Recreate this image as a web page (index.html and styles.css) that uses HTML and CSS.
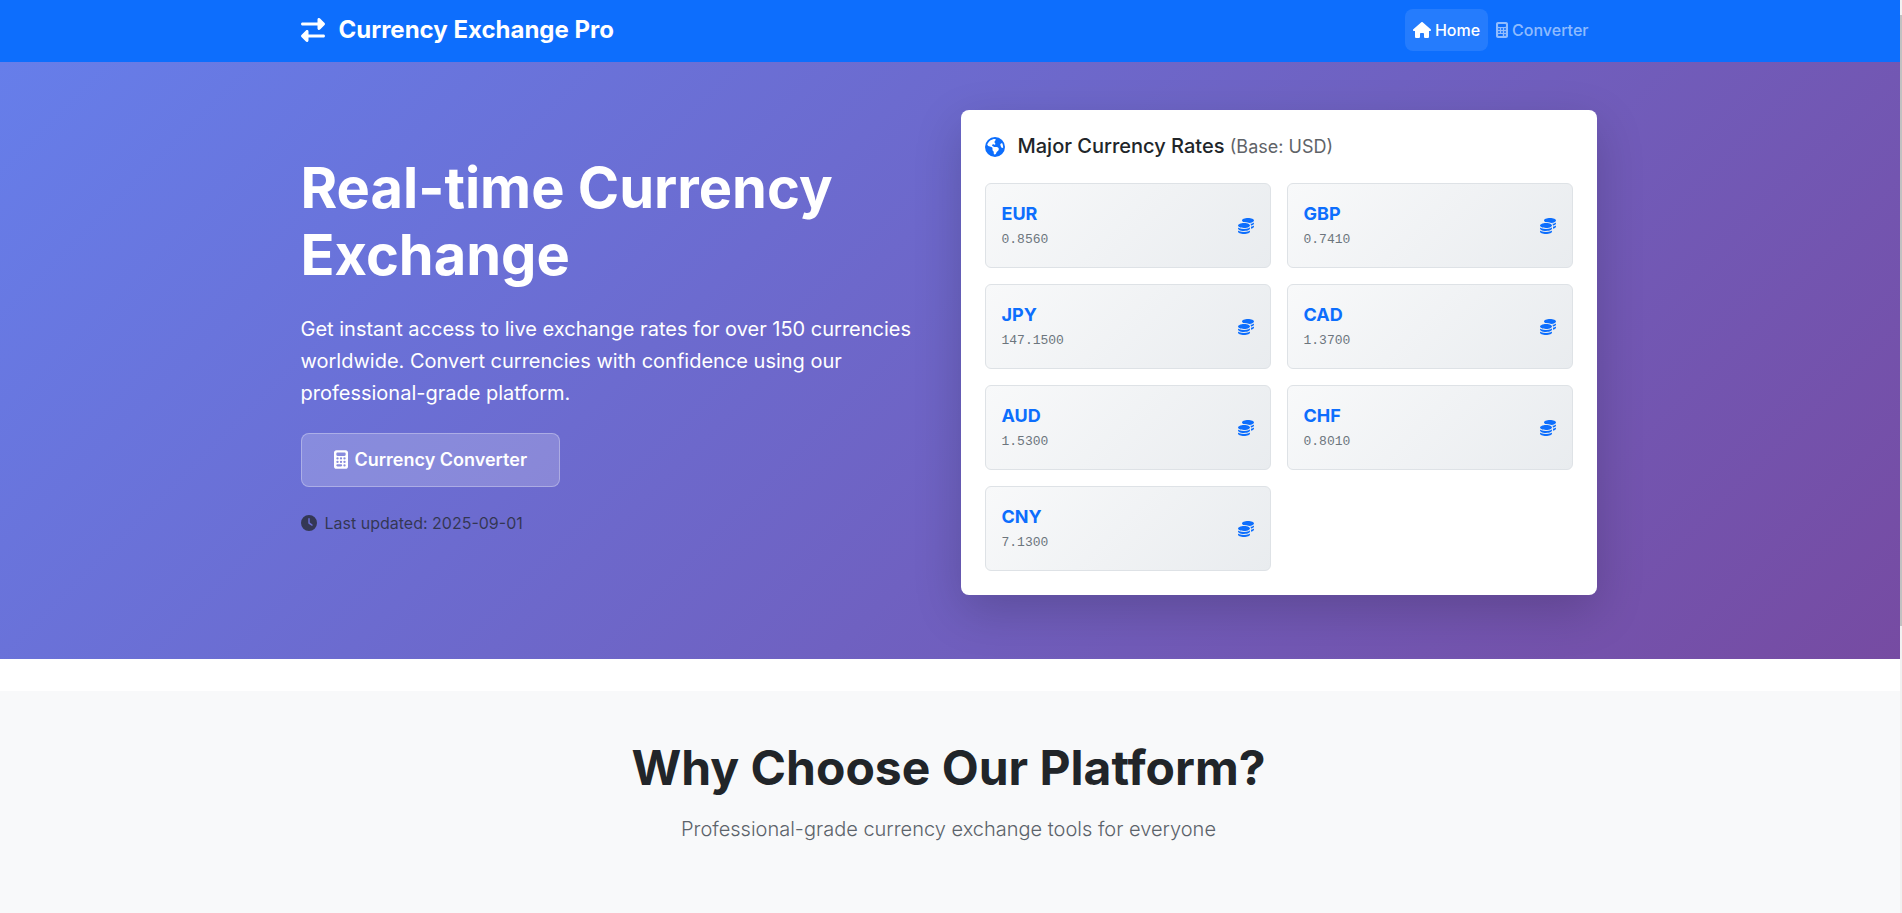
FILE: index.html
```html
<!DOCTYPE html>
<html lang="en">
<head>
<meta charset="utf-8">
<title>Currency Exchange Pro</title>
<link rel="stylesheet" href="styles.css">
</head>
<body>
<svg class="sprite" aria-hidden="true">
  <symbol id="i-calc" viewBox="0 0 384 512"><path fill-rule="evenodd" d="M64 0C28.700 0 0 28.700 0 64V448c0 35.300 28.700 64 64 64H320c35.300 0 64-28.700 64-64V64c0-35.300-28.700-64-64-64H64zM96 64H288c17.700 0 32 14.300 32 32v32c0 17.700-14.300 32-32 32H96c-17.700 0-32-14.300-32-32V96c0-17.700 14.300-32 32-32zm32 160a32 32 0 1 1-64 0 32 32 0 1 1 64 0zM96 352a32 32 0 1 1 0-64 32 32 0 1 1 0 64zM64 416c0-17.700 14.300-32 32-32h96c17.700 0 32 14.300 32 32s-14.300 32-32 32H96c-17.700 0-32-14.300-32-32zM192 256a32 32 0 1 1 0-64 32 32 0 1 1 0 64zm32 64a32 32 0 1 1-64 0 32 32 0 1 1 64 0zm64-64a32 32 0 1 1 0-64 32 32 0 1 1 0 64zm32 64a32 32 0 1 1-64 0 32 32 0 1 1 64 0zM288 448a32 32 0 1 1 0-64 32 32 0 1 1 0 64z"/></symbol>
  <symbol id="i-coins" viewBox="0 0 512 512"><path d="M512 80c0 18-14.300 34.600-38.400 48c-29.100 16.100-72.500 27.500-122.300 30.900c-3.700-1.800-7.400-3.500-11.300-5C300.600 137.400 248.200 128 192 128c-8.300 0-16.400 .2-24.500 .6l-1.100-.6C142.300 114.600 128 98 128 80c0-44.200 86-80 192-80S512 35.800 512 80zM160.700 161.100c10.200-.7 20.700-1.100 31.300-1.100c62.200 0 117.400 12.300 152.500 31.400C369.300 204.900 384 221.700 384 240c0 4-.7 7.900-2.100 11.700c-4.600 13.200-17 25.300-35 35.500c0 0 0 0 0 0c-.1 .1-.3 .1-.4 .2c-.3 .2-.6 .3-.9 .5c-35 19.400-90.800 32-153.600 32c-59.600 0-112.900-11.300-148.200-29.100c-1.900-.9-3.700-1.900-5.500-2.900C14.300 274.600 0 258 0 240c0-34.800 53.400-64.500 128-75.400c10.500-1.500 21.400-2.700 32.700-3.500zM416 240c0-21.900-10.600-39.900-24.100-53.400c28.300-4.400 54.200-11.400 76.200-20.500c16.300-6.800 31.500-15.200 43.900-25.500V176c0 19.300-16.500 37.100-43.800 50.900c-14.600 7.400-32.400 13.700-52.400 18.500c.1-1.800 .2-3.500 .2-5.300zm-32 96c0 18-14.300 34.600-38.400 48c-1.800 1-3.600 1.900-5.500 2.900C304.900 404.700 251.600 416 192 416c-62.800 0-118.600-12.600-153.600-32C14.300 370.600 0 354 0 336V300.600c12.500 10.300 27.600 18.700 43.900 25.500C83.400 342.600 135.800 352 192 352s108.600-9.400 148.100-25.900c7.800-3.200 15.300-6.900 22.400-10.900c6.100-3.400 11.800-7.200 17.200-11.200c1.500-1.100 2.900-2.300 4.300-3.400V304v5.700V336zm32 0V304 278.100c19-4.200 36.500-9.500 52.100-16c16.300-6.800 31.500-15.200 43.900-25.500V272c0 10.500-5 21-14.900 30.900c-16.300 16.300-45 29.700-81.300 38.400c.1-1.700 .2-3.500 .2-5.300zM192 448c56.200 0 108.600-9.400 148.100-25.900c16.300-6.800 31.500-15.200 43.900-25.500V432c0 44.200-86 80-192 80S0 476.200 0 432V396.600c12.500 10.300 27.600 18.700 43.900 25.500C83.400 438.600 135.800 448 192 448z"/></symbol>
</svg>
<div class="scroll-track" aria-hidden="true"><div class="scroll-thumb"></div></div>
<nav class="navbar">
  <div class="container navbar-inner">
    <a class="brand" href="#">
      <svg class="icon icon-swap" viewBox="0 0 512 512" aria-hidden="true"><path d="M32 96l320 0V32c0-12.900 7.800-24.600 19.800-29.600s25.700-2.200 34.900 6.900l96 96c6 6 9.400 14.100 9.400 22.600s-3.400 16.600-9.400 22.600l-96 96c-9.200 9.200-22.900 11.900-34.900 6.900s-19.800-16.600-19.800-29.600V160L32 160c-17.700 0-32-14.300-32-32s14.300-32 32-32zM480 352c17.700 0 32 14.300 32 32s-14.300 32-32 32H160v64c0 12.900-7.800 24.600-19.800 29.600s-25.700 2.200-34.900-6.900l-96-96c-6-6-9.400-14.100-9.400-22.600s3.400-16.600 9.400-22.600l96-96c9.200-9.200 22.900-11.900 34.900-6.900s19.800 16.600 19.800 29.600l0 64H480z"/></svg>
      <span>Currency Exchange Pro</span>
    </a>
    <div class="nav-links">
      <a class="nav-link active" href="#"><svg class="icon icon-home" viewBox="0 0 576 512" aria-hidden="true"><path d="M575.800 255.500c0 18-15 32.100-32 32.100h-32l.7 160.200c0 2.700-.2 5.400-.5 8.100V472c0 22.100-17.900 40-40 40H456c-1.100 0-2.200 0-3.300-.1c-1.400 .1-2.800 .1-4.200 .1H416 392c-22.100 0-40-17.900-40-40V448 384c0-17.700-14.300-32-32-32H256c-17.700 0-32 14.300-32 32v64 24c0 22.100-17.900 40-40 40H160 128.100c-1.500 0-3-.1-4.500-.2c-1.200 .1-2.400 .2-3.600 .2H104c-22.100 0-40-17.900-40-40V360c0-.9 0-1.900 .1-2.800V287.600H32c-18 0-32-14-32-32.100c0-9 3-17 10-24L266.400 8c7-7 15-8 22-8s15 2 21 7L564.800 231.500c8 7 12 15 11 24z"/></svg><span>Home</span></a>
      <a class="nav-link" href="#"><svg class="icon icon-calc" aria-hidden="true"><use href="#i-calc"/></svg><span>Converter</span></a>
    </div>
  </div>
</nav>
<header class="hero">
  <div class="container hero-grid">
    <div class="hero-text">
      <h1>Real-time Currency Exchange</h1>
      <p class="lead">Get instant access to live exchange rates for over 150 currencies worldwide. Convert currencies with confidence using our professional-grade platform.</p>
      <a class="cta" href="#"><svg class="icon icon-cta" aria-hidden="true"><use href="#i-calc"/></svg><span>Currency Converter</span></a>
      <p class="updated"><svg class="icon icon-clock" viewBox="0 0 512 512" aria-hidden="true"><path d="M256 0a256 256 0 1 1 0 512A256 256 0 1 1 256 0zM232 120V256c0 8 4 15.500 10.700 20l96 64c11 7.400 25.900 4.400 33.300-6.700s4.400-25.900-6.700-33.300L280 243.200V120c0-13.300-10.700-24-24-24s-24 10.700-24 24z"/></svg><span>Last updated: 2025-09-01</span></p>
    </div>
    <section class="rates">
      <h2 class="rates-title"><svg class="icon icon-globe" viewBox="0 0 512 512" aria-hidden="true"><path d="M57.700 193l9.400 16.400c8.300 14.500 21.900 25.200 38 29.800L163 255.700c17.200 4.900 29 20.600 29 38.500v39.900c0 11 6.200 21 16 25.900s16 14.900 16 25.900v39c0 15.600 14.900 26.900 29.900 22.600c16.100-4.600 28.600-17.500 32.700-33.800l2.800-11.200c4.200-16.900 15.200-31.400 30.300-40l8.100-4.600c15-8.500 24.200-24.500 24.200-41.700v-8.300c0-12.700-5.100-24.900-14.100-33.900l-3.900-3.900c-9-9-21.200-14.100-33.900-14.100H257c-11.100 0-22.100-2.900-31.800-8.400l-34.500-19.700c-4.300-2.500-7.600-6.500-9.200-11.200c-3.200-9.600 1.100-20 10.200-24.500l5.900-3c6.600-3.300 14.300-3.900 21.300-1.500l23.200 7.700c8.200 2.700 17.200-.4 21.900-7.500c4.700-7 4.200-16.300-1.200-22.800l-13.600-16.300c-10-12-9.900-29.500 .3-41.300l15.700-18.300c8.800-10.300 10.200-25 3.500-36.700l-2.400-4.200c-3.500-.2-6.900-.3-10.400-.3C163.100 48 84.400 108.900 57.700 193zM464 256c0-36.800-9.600-71.400-26.400-101.500L412 164.800c-15.700 6.300-23.800 23.800-18.500 39.800l16.900 50.700c3.500 10.400 12 18.300 22.600 20.900l29.100 7.300c1.200-9 1.800-18.200 1.800-27.500zM0 256a256 256 0 1 1 512 0A256 256 0 1 1 0 256z" fill-rule="evenodd"/></svg><span>Major Currency Rates <small>(Base: USD)</small></span></h2>
      <div class="rate-grid">
        <div class="rate"><div><h3>EUR</h3><p>0.8560</p></div><svg class="icon icon-coins" aria-hidden="true"><use href="#i-coins"/></svg></div>
        <div class="rate"><div><h3>GBP</h3><p>0.7410</p></div><svg class="icon icon-coins" aria-hidden="true"><use href="#i-coins"/></svg></div>
        <div class="rate"><div><h3>JPY</h3><p>147.1500</p></div><svg class="icon icon-coins" aria-hidden="true"><use href="#i-coins"/></svg></div>
        <div class="rate"><div><h3>CAD</h3><p>1.3700</p></div><svg class="icon icon-coins" aria-hidden="true"><use href="#i-coins"/></svg></div>
        <div class="rate"><div><h3>AUD</h3><p>1.5300</p></div><svg class="icon icon-coins" aria-hidden="true"><use href="#i-coins"/></svg></div>
        <div class="rate"><div><h3>CHF</h3><p>0.8010</p></div><svg class="icon icon-coins" aria-hidden="true"><use href="#i-coins"/></svg></div>
        <div class="rate"><div><h3>CNY</h3><p>7.1300</p></div><svg class="icon icon-coins" aria-hidden="true"><use href="#i-coins"/></svg></div>
      </div>
    </section>
  </div>
</header>
<section class="features">
  <div class="container">
    <h2>Why Choose Our Platform?</h2>
    <p>Professional-grade currency exchange tools for everyone</p>
  </div>
</section>
</body>
</html>
```
FILE: styles.css
```css
* { box-sizing: border-box; }
html { height: 100%; overflow: hidden; }
body {
  display: flex;
  flex-direction: column;
  min-height: 100%;
  margin: 0;
  background: #fff;
  color: #212529;
  font-family: Inter, "Liberation Sans", sans-serif;
  font-size: 16px;
  line-height: 24px;
}
h1, h2, h3, p { margin: 0; }
a { color: inherit; text-decoration: none; }
.sprite { position: absolute; width: 0; height: 0; }
.icon { display: block; flex: none; fill: currentColor; }
.container { width: 100%; max-width: 1320px; margin: 0 auto; padding: 0 12px; }

.scroll-track {
  position: fixed;
  top: 0;
  right: 0;
  bottom: 0;
  z-index: 10;
  width: 2px;
  padding-top: 15px;
  background: #f1f1f1;
}
.scroll-thumb { height: 68%; background: #c1c1c1; }

.navbar { padding: 9px 5px 11px 0; background: #0d6efd; color: #fff; }
.navbar-inner { display: flex; align-items: center; justify-content: space-between; }
.brand { display: flex; align-items: center; gap: 14px; font-size: 24px; font-weight: 700; line-height: 36px; }
.icon-swap { width: 24px; height: 24px; }
.nav-links { display: flex; }
.nav-link {
  display: flex;
  align-items: center;
  gap: 4px;
  padding: 9px 8px;
  border-radius: 8px;
  color: rgba(255, 255, 255, 0.55);
  font-weight: 500;
}
.nav-link.active { background: rgba(255, 255, 255, 0.1); color: #fff; }
.icon-home { width: 18px; height: 16px; }
.icon-calc { width: 12px; height: 16px; }

.hero {
  padding: 48px 5px 64px 0;
  background: linear-gradient(135deg, #667eea 0%, #764ba2 100%);
  color: #fff;
}
.hero-grid { display: grid; grid-template-columns: 1fr 1fr; gap: 24px; align-items: center; }
.hero-text { padding-bottom: 16px; }
h1 { margin-bottom: 24px; font-size: 56px; font-weight: 700; line-height: 67px; }
.lead { margin-bottom: 24px; font-size: 20px; line-height: 32px; }
.cta {
  display: inline-flex;
  align-items: center;
  gap: 7px;
  padding: 12px 32px;
  border: 1px solid rgba(255, 255, 255, 0.3);
  border-radius: 8px;
  background: rgba(255, 255, 255, 0.2);
  font-size: 18px;
  font-weight: 600;
  line-height: 28px;
}
.icon-cta { width: 14px; height: 19px; }
.updated { display: flex; align-items: center; gap: 8px; margin-top: 24px; color: rgba(33, 37, 41, 0.75); }
.icon-clock { width: 16px; height: 16px; }

.rates {
  padding: 24px;
  border-radius: 8px;
  background: #fff;
  color: #212529;
  box-shadow: 0 16px 48px rgba(0, 0, 0, 0.18);
}
.rates-title { display: flex; align-items: center; gap: 13px; margin-bottom: 24px; font-size: 20px; font-weight: 500; line-height: 24px; }
.rates-title small { color: #5f6368; font-size: 18px; font-weight: 400; }
.icon-globe { width: 20px; height: 20px; color: #0d6efd; }
.rate-grid { display: grid; grid-template-columns: 1fr 1fr; gap: 16px; }
.rate {
  display: flex;
  align-items: center;
  justify-content: space-between;
  padding: 16px;
  border: 1px solid #dee2e6;
  border-radius: 6px;
  background: linear-gradient(135deg, #f8f9fa 0%, #e9ecef 100%);
  color: #0d6efd;
}
.rate h3 { font-size: 18px; font-weight: 700; line-height: 28px; }
.rate p { color: #6c757d; font-family: "Liberation Mono", monospace; font-size: 13px; line-height: 23px; }
.icon-coins { width: 16px; height: 16px; }

.features { flex: 1; margin-top: 32px; padding: 48px 5px 48px 0; background: #f8f9fa; text-align: center; }
.features h2 { margin-bottom: 16px; font-size: 48px; font-weight: 700; line-height: 58px; }
.features p { color: #5c636a; font-size: 20px; font-weight: 300; line-height: 32px; }
```
